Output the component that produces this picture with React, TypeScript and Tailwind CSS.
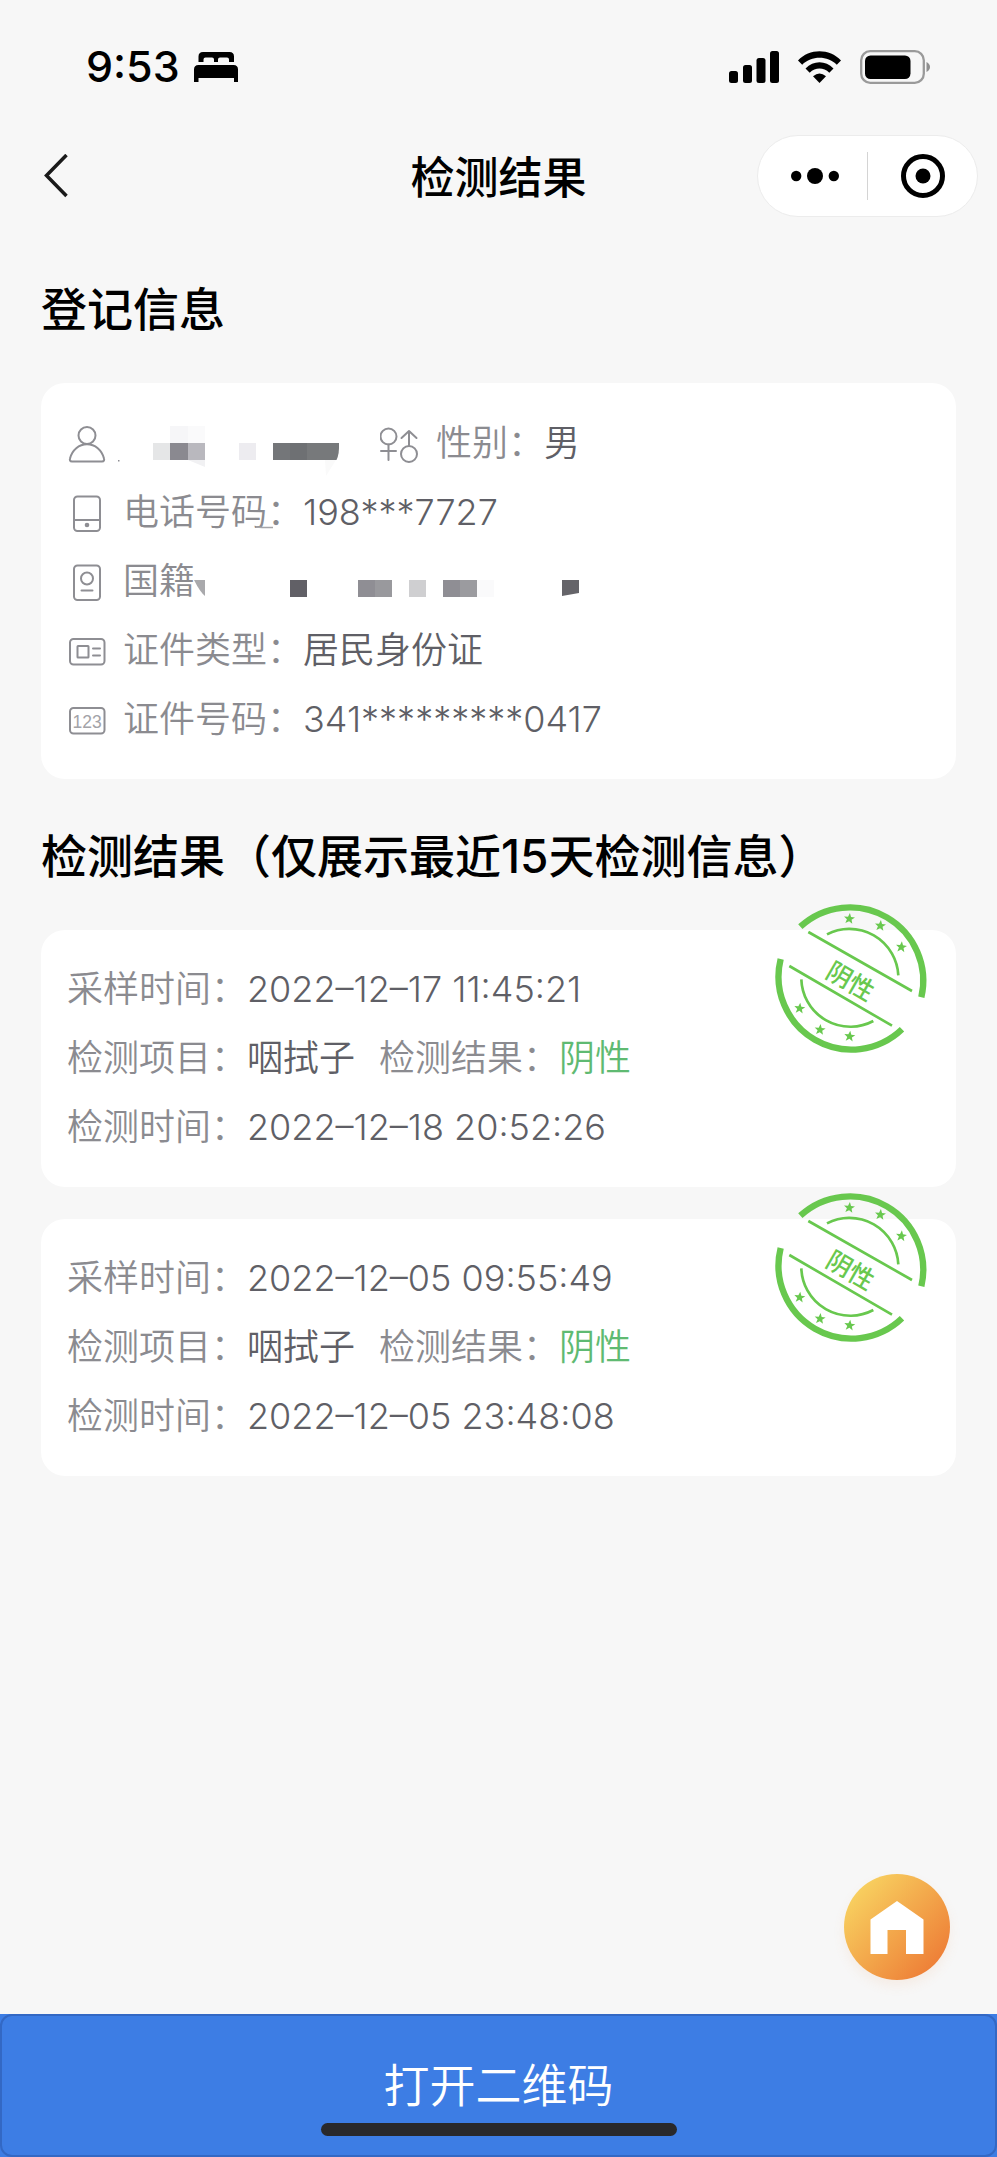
import type { ReactNode } from "react";

function LineIcon({ children }: { children: ReactNode }) {
  return (
    <svg
      className="h-10 w-[38px] shrink-0"
      viewBox="0 0 38 40"
      fill="none"
      stroke="#8e8e93"
      strokeWidth="2"
      strokeLinecap="round"
      strokeLinejoin="round"
      aria-hidden="true"
    >
      {children}
    </svg>
  );
}

const PersonIcon = () => (
  <LineIcon>
    <circle cx="19" cy="12.500" r="8.500" />
    <path d="M4 38.500C1.800 38.500 1.600 37 2 35.500C4 27 11 21.200 19 21.200C27 21.200 34 27 36 35.500C36.400 37 36.200 38.500 34 38.500Z" />
  </LineIcon>
);

const PhoneIcon = () => (
  <LineIcon>
    <rect x="6" y="4.500" width="26" height="34.500" rx="3.500" />
    <path d="M6 28H32" />
    <circle cx="19" cy="33" r="2.300" fill="#8e8e93" stroke="none" />
  </LineIcon>
);

const PassportIcon = () => (
  <LineIcon>
    <rect x="6" y="4.500" width="26" height="34.500" rx="3.500" />
    <circle cx="19" cy="17.500" r="6" />
    <path d="M13.500 29.500H24.500" />
  </LineIcon>
);

const IdCardIcon = () => (
  <LineIcon>
    <rect x="2" y="9" width="34.500" height="25.500" rx="3.500" />
    <rect x="9.500" y="16" width="11" height="11.500" rx="0.500" />
    <path d="M25 18.500H32M25 25.500H32" />
  </LineIcon>
);

const NumberIcon = () => (
  <LineIcon>
    <rect x="2" y="9" width="34.500" height="25.500" rx="3.500" />
    <text
      x="19.200"
      y="28.500"
      textAnchor="middle"
      fontSize="17.500"
      fill="#a3a3a8"
      stroke="none"
      fontFamily="Liberation Sans, sans-serif"
    >
      123
    </text>
  </LineIcon>
);

const GenderIcon = () => (
  <LineIcon>
    <circle cx="8.500" cy="13.500" r="8" />
    <path d="M8.500 21.500V37M1 28H16" />
    <circle cx="29" cy="31" r="8" />
    <path d="M29 23V8M21.500 15L29 8L36.500 15" />
  </LineIcon>
);

function NameMosaic() {
  return (
    <svg className="h-[69px] w-[238px] shrink-0 overflow-visible" viewBox="0 0 238 69" aria-hidden="true">
      <rect x="-6" y="52" width="1.500" height="1.500" fill="#8e8e93" />
      <rect x="46" y="18" width="18" height="17" fill="#f6f6f8" />
      <rect x="64" y="18" width="17" height="17" fill="#fafafb" />
      <rect x="29" y="35" width="17" height="17" fill="#e5e6e7" />
      <rect x="46" y="35" width="18" height="17" fill="#8a8990" />
      <rect x="64" y="35" width="17" height="17" fill="#b9b8be" />
      <path d="M64 52H81V59Z" fill="#f1f1f3" />
      <rect x="115" y="35" width="17" height="17" fill="#edecf0" />
      <rect x="149" y="35" width="17" height="17" fill="#747679" />
      <rect x="166" y="35" width="17" height="17" fill="#6e7073" />
      <path d="M183 35H215Q215.500 46 212.500 52H183Z" fill="#77797b" />
      <path d="M201 52H212L202 68Z" fill="#fafafa" />
    </svg>
  );
}

function NationalityMosaic() {
  return (
    <svg className="h-[69px] w-96 shrink-0 overflow-visible" viewBox="0 0 384 69" aria-hidden="true">
      <path d="M61 -19L67 -18.500H78" fill="none" stroke="#a5a5a9" strokeWidth="1.500" />
      <path d="M-1 34H10V50Q5 46 -1 34Z" fill="#a9a9ac" />
      <rect x="95" y="34" width="17" height="17" fill="#616066" />
      <rect x="163" y="34" width="17" height="17" fill="#8f8e94" />
      <rect x="180" y="34" width="17" height="17" fill="#99999d" />
      <rect x="214" y="34" width="17" height="17" fill="#cfcfd1" />
      <rect x="248" y="34" width="17" height="17" fill="#8f8e94" />
      <rect x="265" y="34" width="17" height="17" fill="#9b9b9f" />
      <rect x="282" y="34" width="17" height="17" fill="#fafafb" />
      <path d="M367 34H384V47L367 50Z" fill="#656469" />
    </svg>
  );
}

const starPoints =
  "0,-17 4.500,-5.500 16.500,-5 7,2.500 10.500,14.500 0,7.500 -10.500,14.500 -7,2.500 -16.500,-5 -4.500,-5.500";

const stars = [
  [328, 117],
  [421, 138],
  [484, 202],
  [179, 386],
  [240, 450],
  [329, 470],
];

function Stamp() {
  return (
    <svg
      className="absolute right-[30px] -top-[27px] size-[150px] overflow-visible"
      viewBox="108 70 450 450"
      role="img"
      aria-label="阴性"
      fill="none"
      stroke="#68c84e"
    >
      <path d="M181 141A220 220 0 0 1 544 353" strokeWidth="19" />
      <path d="M122 238A219 219 0 0 0 486 449" strokeWidth="19" />
      <path d="M205 157L516 334M148 259L456 438" strokeWidth="8" />
      <path d="M261 164A147 147 0 0 1 475 287" strokeWidth="8" />
      <path d="M184 299A147 147 0 0 0 400 424" strokeWidth="8" />
      {stars.map(([x, y]) => (
        <polygon
          key={`${x}-${y}`}
          points={starPoints}
          transform={`translate(${x} ${y}) rotate(6)`}
          fill="#68c84e"
          stroke="none"
        />
      ))}
      <text
        transform="translate(334 300) rotate(30)"
        textAnchor="middle"
        dominantBaseline="central"
        fontSize="76"
        fontWeight="500"
        fontFamily="Noto Sans CJK SC, sans-serif"
        fill="#68c84e"
        stroke="none"
      >
        阴性
      </text>
    </svg>
  );
}

function Label({ children }: { children: ReactNode }) {
  return <span className="text-[#8b8b90]">{children}</span>;
}

function InfoRow({ icon, label, value }: { icon: ReactNode; label: string; value: string }) {
  return (
    <div className="flex h-[69px] items-center gap-[17px]">
      {icon}
      <p>
        <Label>{label}：</Label>
        {value}
      </p>
    </div>
  );
}

interface TestResult {
  sampled: string;
  item: string;
  result: string;
  tested: string;
}

const results: TestResult[] = [
  { sampled: "2022–12–17 11:45:21", item: "咽拭子", result: "阴性", tested: "2022–12–18 20:52:26" },
  { sampled: "2022–12–05 09:55:49", item: "咽拭子", result: "阴性", tested: "2022–12–05 23:48:08" },
];

function ResultCard({ data }: { data: TestResult }) {
  return (
    <article className="relative rounded-3xl bg-white px-[26px] py-[25px] leading-[69px]">
      <p>
        <Label>采样时间：</Label>
        {data.sampled}
      </p>
      <p className="flex flex-wrap gap-x-6">
        <span>
          <Label>检测项目：</Label>
          {data.item}
        </span>
        <span>
          <Label>检测结果：</Label>
          <span className="text-[#5fba72]">{data.result}</span>
        </span>
      </p>
      <p>
        <Label>检测时间：</Label>
        {data.tested}
      </p>
      <Stamp />
    </article>
  );
}

function SectionTitle({ children }: { children: ReactNode }) {
  return <h2 className="pt-1 text-[46px] leading-[147px] font-medium text-black">{children}</h2>;
}

function StatusBar() {
  return (
    <div className="flex h-[135px] items-center justify-between pr-[67px] pb-0.5 pl-[86px]">
      <div className="flex items-center gap-3.5">
        <span className="text-[43px] leading-none font-medium text-black">9:53</span>
        <svg className="h-[30px] w-11" viewBox="0 0 44 30" aria-hidden="true">
          <path d="M4.500 10V4.500Q4.500 0 9 0H35.500Q40 0 40 4.500V10H35V7.500Q35 5.500 33 5.500H26Q24 5.500 24 7.500V10H20V7.500Q20 5.500 18 5.500H11.500Q9.500 5.500 9.500 7.500V10Z" />
          <path d="M0 30V17.500Q0 13 4.500 13H39.500Q44 13 44 17.500V30H40V26H4.500V30Z" />
        </svg>
      </div>
      <svg className="h-[34px] w-[202px]" viewBox="0 0 202 34" aria-hidden="true">
        <rect x="1" y="21" width="9" height="12" rx="2.500" />
        <rect x="15" y="15" width="9" height="18" rx="2.500" />
        <rect x="28.500" y="8" width="9" height="25" rx="2.500" />
        <rect x="42" y="1" width="9" height="32" rx="2.500" />
        <path d="M70 10.500C81.500 -1.800 101.500 -1.800 113 10.500L108.800 14.800C99.500 5.500 83.500 5.500 74.200 14.800Z" />
        <path d="M77.500 18.500C85.500 10 97.500 10 105.500 18.500L101.300 22.800C95.500 17.200 87.500 17.200 81.700 22.800Z" />
        <path d="M91.500 33L98 26.300Q91.500 20.500 85 26.300Z" />
        <rect x="133.200" y="1.200" width="62.600" height="31.600" rx="9" fill="none" stroke="#9a9a9a" strokeWidth="2.300" />
        <rect x="137" y="5.500" width="45.500" height="23.500" rx="5.500" />
        <path d="M198.500 12Q202 14 202 17Q202 20 198.500 22Z" fill="#8f8f8f" />
      </svg>
    </div>
  );
}

function NavBar() {
  return (
    <header className="grid h-[82px] grid-cols-[1fr_auto_1fr] items-center px-[19px]">
      <button type="button" aria-label="返回" className="ml-[25px] justify-self-start">
        <svg className="h-11 w-6" viewBox="0 0 24 44" fill="none" stroke="#1a1a1a" strokeWidth="3.500" aria-hidden="true">
          <path d="M22.500 1L2.500 21.500L22.500 42" />
        </svg>
      </button>
      <h1 className="pt-1 text-[44px] leading-none font-medium text-black">检测结果</h1>
      <div className="flex h-[82px] w-[221px] items-center justify-self-end rounded-full border border-[#ececec] bg-white">
        <button type="button" aria-label="更多" className="flex h-full w-[109px] items-center justify-center pl-1">
          <svg className="h-4 w-12" viewBox="0 0 48 16" aria-hidden="true">
            <circle cx="5.200" cy="8" r="5.200" />
            <circle cx="24" cy="8" r="8" />
            <circle cx="42.800" cy="8" r="5.200" />
          </svg>
        </button>
        <span className="h-12 w-px bg-[#d4d4d4]" />
        <button type="button" aria-label="关闭" className="flex h-full flex-1 items-center justify-center">
          <svg className="size-11" viewBox="0 0 44 44" aria-hidden="true">
            <circle cx="22" cy="22" r="19.500" fill="none" stroke="#000" strokeWidth="5" />
            <circle cx="22" cy="22" r="7.500" />
          </svg>
        </button>
      </div>
    </header>
  );
}

export default function App() {
  return (
    <div className="flex min-h-screen flex-col bg-[#f7f7f7] font-['Inter','Noto_Sans_CJK_SC',sans-serif] text-4xl font-[350] text-[#5f5f66]">
      <StatusBar />
      <NavBar />

      <main className="flex-1 px-[41px] pt-[15px]">
        <SectionTitle>登记信息</SectionTitle>
        <section className="rounded-3xl bg-white px-[27px] pt-[25px] pb-[26px]">
          <div className="flex h-[69px] items-center gap-[18px]">
            <PersonIcon />
            <NameMosaic />
            <GenderIcon />
            <p>
              <Label>性别：</Label>男
            </p>
          </div>
          <InfoRow icon={<PhoneIcon />} label="电话号码" value="198***7727" />
          <div className="flex h-[69px] items-center">
            <div className="flex items-center gap-[17px]">
              <PassportIcon />
              <Label>国籍</Label>
            </div>
            <NationalityMosaic />
          </div>
          <InfoRow icon={<IdCardIcon />} label="证件类型" value="居民身份证" />
          <InfoRow icon={<NumberIcon />} label="证件号码" value="341*********0417" />
        </section>

        <SectionTitle>检测结果（仅展示最近15天检测信息）</SectionTitle>
        <div className="flex flex-col gap-8">
          {results.map((r) => (
            <ResultCard key={r.sampled} data={r} />
          ))}
        </div>
      </main>

      <a
        href="#home"
        aria-label="首页"
        className="mr-[47px] mb-[34px] self-end rounded-full shadow-[0_6px_12px_rgba(240,150,80,0.1)]"
      >
        <svg className="size-[106px]" viewBox="0 0 106 106" aria-hidden="true">
          <defs>
            <linearGradient id="home-fill" x1="0.100" y1="0.150" x2="0.850" y2="0.850">
              <stop offset="0" stopColor="#f8d160" />
              <stop offset="1" stopColor="#ee8138" />
            </linearGradient>
          </defs>
          <circle cx="53" cy="53" r="53" fill="url(#home-fill)" />
          <path d="M53 27L79.500 45.500V80H62V56H43.500V80H26.500V45.500Z" fill="#fff" />
        </svg>
      </a>

      <footer className="relative bg-[#3d7de4]">
        <button
          type="button"
          className="h-[143px] w-full rounded-xl border-2 border-[#3368c4] pb-0.5 text-[46px] leading-none text-white"
        >
          打开二维码
        </button>
        <div className="absolute inset-x-0 bottom-[21px] mx-auto h-[13px] w-[356px] rounded-full bg-[#29292b]" />
      </footer>
    </div>
  );
}
